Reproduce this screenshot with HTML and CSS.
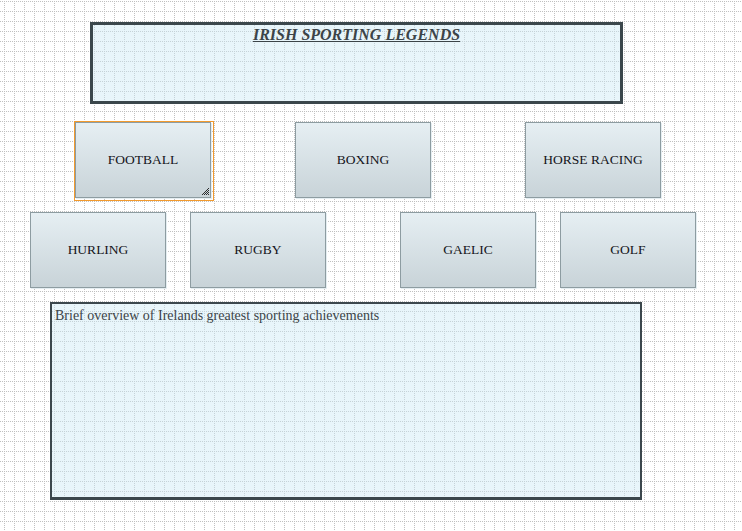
FILE: index.html
```html
<!DOCTYPE html>
<html lang="en">
<head>
    <meta charset="UTF-8">
    <title>Irish Sporting Legends</title>
    <link rel="stylesheet" href="styles.css">
</head>
<body>
    <div class="page">
        <div class="title-box">
            <h1>IRISH SPORTING LEGENDS</h1>
        </div>

        <div class="row row-top">
            <div class="selected">
                <button class="sport">FOOTBALL</button>
                <svg class="grip" width="7" height="7" viewBox="0 0 7 7">
                    <rect x="6" y="0" width="1" height="1"/>
                    <rect x="5" y="1" width="1" height="1"/>
                    <rect x="4" y="2" width="1" height="1"/><rect x="6" y="2" width="1" height="1"/>
                    <rect x="3" y="3" width="1" height="1"/><rect x="5" y="3" width="1" height="1"/>
                    <rect x="2" y="4" width="1" height="1"/><rect x="4" y="4" width="1" height="1"/><rect x="6" y="4" width="1" height="1"/>
                    <rect x="1" y="5" width="1" height="1"/><rect x="3" y="5" width="1" height="1"/><rect x="5" y="5" width="1" height="1"/>
                    <rect x="0" y="6" width="1" height="1"/><rect x="2" y="6" width="1" height="1"/><rect x="4" y="6" width="1" height="1"/><rect x="6" y="6" width="1" height="1"/>
                </svg>
            </div>
            <button class="sport boxing">BOXING</button>
            <button class="sport racing">HORSE RACING</button>
        </div>

        <div class="row row-bottom">
            <button class="sport">HURLING</button>
            <button class="sport rugby">RUGBY</button>
            <button class="sport gaelic">GAELIC</button>
            <button class="sport golf">GOLF</button>
        </div>

        <div class="overview">Brief overview of Irelands greatest sporting achievements</div>
    </div>
</body>
</html>
```

FILE: styles.css
```css
html, body {
    margin: 0;
    height: 100%;
}

/* dotted designer grid, 10px cells */
body {
    background-color: #fff;
    background-image:
        conic-gradient(at 1px 1px, transparent 0 75%, #c0c0c0 75% 100%),
        conic-gradient(at 1px 1px, transparent 0 75%, #c0c0c0 75% 100%);
    background-size: 10px 2px, 2px 10px;
    background-position: 4px 1px, 4px 1px;
    font-family: "Liberation Serif", "Times New Roman", serif;
}

.page {
    padding-top: 22px;
}

.title-box {
    margin-left: 90px;
    width: 533px;
    height: 82px;
    box-sizing: border-box;
    border: 3px solid #3b474c;
    background-color: rgba(205, 232, 245, 0.45);
}

.title-box h1 {
    margin: 0;
    padding-top: 1px;
    text-align: center;
    font-size: 16px;
    font-weight: bold;
    font-style: italic;
    text-decoration: underline;
    color: #3c4448;
    line-height: 18px;
}

.row {
    display: flex;
    align-items: flex-start;
}

.row-top {
    margin-top: 17px;
    padding-left: 74px;
}

.row-bottom {
    margin-top: 11px;
    padding-left: 30px;
}

.sport {
    width: 136px;
    height: 76px;
    box-sizing: border-box;
    border: 1px solid #8d9ca1;
    background: linear-gradient(to bottom, #e6eff3, #c8d3d8);
    box-shadow: 1px 1px 0 #e4edf1;
    font-family: "Liberation Serif", "Times New Roman", serif;
    font-size: 13.5px;
    color: #141420;
    padding: 0;
    margin: 0;
}

.selected {
    position: relative;
    width: 138px;
    height: 78px;
    border: 1px solid #f29a2e;
}

.grip {
    position: absolute;
    right: 4px;
    bottom: 5px;
    fill: #2c2c2c;
}

.boxing { margin-left: 81px; }
.racing { margin-left: 94px; }

.row-top .boxing, .row-top .racing { margin-top: 1px; }

.rugby { margin-left: 24px; }
.gaelic { margin-left: 74px; }
.golf { margin-left: 24px; }

.overview {
    margin-top: 14px;
    margin-left: 50px;
    width: 592px;
    height: 198px;
    box-sizing: border-box;
    border: 2px solid #3b474c;
    border-bottom-width: 3px;
    background-color: rgba(205, 232, 245, 0.45);
    padding: 3px 3px;
    font-size: 14px;
    color: #3c4448;
    line-height: 17px;
}
```
